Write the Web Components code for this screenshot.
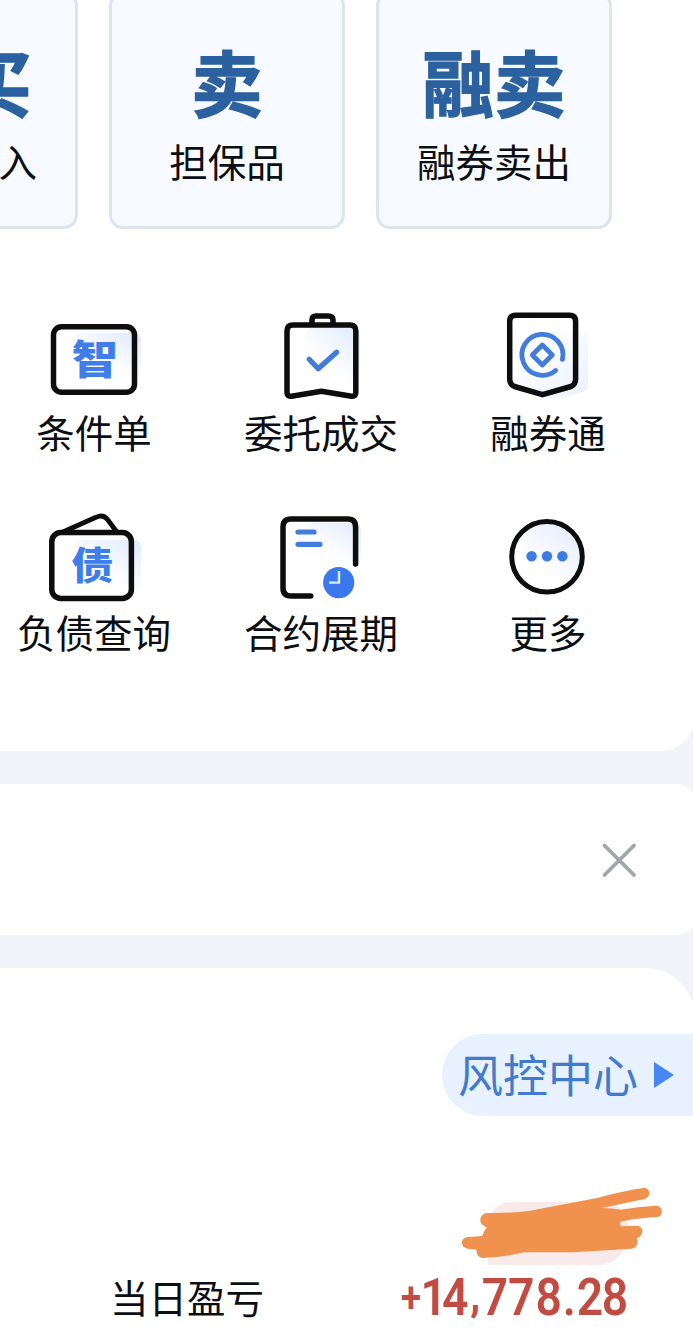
<!DOCTYPE html>
<html lang="zh-CN">
<head>
<meta charset="utf-8">
<meta name="viewport" content="width=device-width, initial-scale=1">
<title>信用交易</title>
<style>
  html, body {
    margin: 0;
    height: 100%;
    overflow: hidden;
    background: #f2f3f8;
    color: #0b0e13;
    font-family: "Noto Sans CJK SC", sans-serif;
  }
</style>
</head>
<body>
<margin-page></margin-page>

<script>
const define = (name, html, init) => {
  const template = document.createElement('template');
  template.innerHTML = html;
  customElements.define(name, class extends HTMLElement {
    constructor() {
      super();
      this.attachShadow({mode: 'open'});
      this.shadowRoot.appendChild(template.content.cloneNode(true));
    }

    connectedCallback() {
      if (init) init(this, this.shadowRoot);
    }
  });
};

const GLOW = `
  <defs>
    <linearGradient id="glow" x1="1" y1="0" x2="0.45" y2="0.7">
      <stop offset="0" stop-color="#dfe9ff"/>
      <stop offset="1" stop-color="#ffffff"/>
    </linearGradient>
  </defs>
`;

// each icon is drawn on a 100x100 box
const ICONS = {
  condition: `
    <rect x="30" y="25" width="67" height="44" rx="6" fill="url(#glow)"/>
    <rect x="9.5" y="18.8" width="81" height="65.4" rx="8" class="line"/>
    <text transform="translate(51 66) scale(1.03 0.88)" class="char">智</text>
  `,
  order: `
    <rect x="35" y="19" width="54" height="60" rx="8" fill="url(#glow)"/>
    <path d="M41 16V12Q41 8 45 8H57Q62 8 62 12V16" class="line"/>
    <path d="M22 17H79Q84.8 17 84.8 23V84Q84.8 89.5 79 88L50.5 83.2L22 88Q16 89.5 16 84V23Q16 17 22 17Z" class="line"/>
    <path d="M38.2 51.2L47.2 60.8L65.6 44.2" class="blue"/>
  `,
  security: `
    <path d="M26 25H83Q90 25 90 32V76Q90 82 85 84L62 90H48L21 79Z" fill="url(#soft)"/>
    <path d="M18 7.3H71.5Q77.6 7.3 77.6 13.5V71Q77.6 76.5 73 78.5L44.5 86.7L16.5 78.5Q11.7 76.5 11.7 71V13.5Q11.7 7.3 18 7.3Z" class="line"/>
    <path d="M64.4 51.4A20.5 20.5 0 1 0 57.6 62.5" class="blue thin"/>
    <path d="M44.3 37L54.3 47L44.3 57L34.3 47Z" class="blue thin"/>
    <linearGradient id="soft" x1="0" y1="0" x2="1" y2="1">
      <stop offset="0.2" stop-color="#ffffff"/>
      <stop offset="1" stop-color="#e9f0ff"/>
    </linearGradient>
  `,
  debt: `
    <rect x="32" y="32" width="65" height="50" rx="7" fill="url(#glow)"/>
    <path d="M20 23.5L52 9.3Q59 6 63.5 11.5L72.5 23.5" class="line" style="stroke-width:4.8"/>
    <rect x="7.8" y="24.6" width="79.6" height="65.8" rx="9" class="line"/>
    <text transform="translate(48.5 70.5) scale(1 0.9)" class="char debt">债</text>
  `,
  extend: `
    <rect x="35" y="15" width="55" height="44" rx="8" fill="url(#glow)"/>
    <path d="M84.6 56V19Q84.6 11 76.6 11H20Q12 11 12 19V80Q12 88 20 88H39.8" class="line"/>
    <path d="M27 24H43M27 36.3H49" class="blue"/>
    <circle cx="67.7" cy="74.6" r="15.6" fill="#3b78ee"/>
    <path d="M68 63V74.6H58" fill="none" stroke="#dcecff" stroke-width="2.4"/>
  `,
  more: `
    <circle cx="49" cy="48.7" r="35.3" fill="url(#glow)" stroke="#0d0d0d" stroke-width="5"/>
    <circle cx="33.6" cy="48.2" r="5.2" fill="#3f7be4"/>
    <circle cx="49" cy="48.2" r="5.2" fill="#3f7be4"/>
    <circle cx="64.4" cy="48.2" r="5.2" fill="#3f7be4"/>
  `,
};

define('trade-tile', `
  <style>
    :host {
      display: flex;
      flex-direction: column;
      align-items: center;
      flex: none;
      box-sizing: border-box;
      width: 236px;
      height: 237px;
      padding-top: 45px;
      border: 3px solid #dbe5f0;
      border-radius: 14px;
      background: #f7fbff;
      white-space: nowrap;
    }
    .title {
      font-size: 71.5px;
      line-height: 80px;
      font-weight: 700;
      color: #2c61a0;
      -webkit-text-stroke: 1.4px #2c61a0;
    }
    .note {
      margin-top: 18px;
      font-size: 38.5px;
      line-height: 44px;
      font-weight: 400;
    }
  </style>
  <div class="title"><slot name="title"></slot></div>
  <div class="note"><slot></slot></div>
`);

define('menu-item', `
  <style>
    :host {
      display: flex;
      flex-direction: column;
      align-items: center;
      gap: 1px;
    }
    svg {
      display: block;
      width: 100px;
      height: 100px;
      overflow: visible;
    }
    .line {
      fill: none;
      stroke: #0d0d0d;
      stroke-width: 5.5;
      stroke-linecap: round;
      stroke-linejoin: round;
    }
    .blue {
      fill: none;
      stroke: #427cdd;
      stroke-width: 5.2;
      stroke-linecap: round;
      stroke-linejoin: round;
    }
    .thin { stroke-width: 4.8; }
    .char {
      font-size: 45px;
      font-weight: 900;
      text-anchor: middle;
      fill: #3f7eea;
    }
    .debt { font-size: 42px; }
    .label {
      font-size: 38.5px;
      line-height: 44px;
      font-weight: 400;
      white-space: nowrap;
    }
  </style>
  <svg viewBox="0 0 100 100"></svg>
  <div class="label"><slot></slot></div>
`, (el, root) => {
  root.querySelector('svg').innerHTML = GLOW + ICONS[el.getAttribute('icon')];
});

define('page-card', `
  <style>
    :host {
      display: block;
      flex: none;
      box-sizing: border-box;
      width: 695px;
      background: #fff;
    }
  </style>
  <slot></slot>
`);

define('close-button', `
  <style>
    :host { display: block; }
    svg { display: block; width: 36px; height: 36px; }
  </style>
  <svg viewBox="0 0 36 36">
    <path d="M3.5 3.5L33 33M33 3.5L3.5 33" fill="none" stroke="#9fa6ac" stroke-width="3.8" stroke-linecap="round"/>
  </svg>
`);

define('risk-link', `
  <style>
    :host {
      display: flex;
      align-items: center;
      box-sizing: border-box;
      width: 253px;
      height: 82px;
      padding-left: 16px;
      border-radius: 41px 0 0 41px;
      background: #e8f1fe;
      color: #427bce;
      font-size: 45px;
      line-height: 60px;
      font-weight: 400;
      white-space: nowrap;
    }
    .text { margin-top: -3px; }
    svg { width: 20px; height: 26px; margin-left: 16px; }
  </style>
  <div class="text"><slot></slot></div>
  <svg viewBox="0 0 20 26"><path d="M0 0L20 13L0 26Z" fill="#4886f5"/></svg>
`);

define('masked-tag', `
  <style>
    :host {
      display: block;
      position: relative;
      width: 140px;
      height: 63px;
      border-radius: 24px 24px 30px 0;
      background: #f8eae8;
    }
    svg {
      position: absolute;
      left: -48px;
      top: -32px;
      width: 253px;
      height: 110px;
    }
  </style>
  <svg viewBox="0 0 759 330">
    <path fill="#f0914e" d="M142 129C120 130 115 157 128 164Q133 170 141 172Q131 182 127 198L84 201C60 203 60 233 83 236L110 239C108 252 115 263 128 264Q190 262 252 247H400L575 236C590 234 597 220 591 205C614 195 611 167 590 167L542 169L541 155Q590 144 651 141C671 139 670 107 649 107Q590 110 543 119Q515 115 485 114Q555 99 614 87C634 82 632 51 610 54Q545 64 475 83L270 122Q210 130 142 129Z"/>
  </svg>
`);

define('profit-row', `
  <style>
    :host {
      display: flex;
      justify-content: space-between;
      align-items: center;
      height: 60px;
    }
    .label {
      margin-top: -6px;
      font-size: 38.5px;
      line-height: 60px;
      font-weight: 400;
    }
    svg { display: block; width: 240px; height: 60px; overflow: visible; }
    text {
      font-family: Roboto, "Liberation Sans", sans-serif;
      font-size: 52.5px;
      font-weight: 600;
      fill: #c24c42;
    }
  </style>
  <div class="label"><slot></slot></div>
  <svg viewBox="0 0 240 60"><g transform="scale(0.88 1)"><text></text></g></svg>
`, (el, root) => {
  // tight pitch, one x for each glyph; small sign, raised comma
  const xs = [2, 24.5, 49, 81, 94, 124, 155, 186, 202, 230.5];
  const marks = {'+': [43, 42, 600], ',': [41, 44, 800]};
  root.querySelector('text').innerHTML = [...el.getAttribute('value')].map((c, i) => {
    const [y, size, weight] = marks[c] || [46, 52.5, 600];
    return `<tspan x="${xs[i]}" y="${y}" style="font-size:${size}px;font-weight:${weight}">${c}</tspan>`;
  }).join('');
});

define('margin-page', `
  <style>
    :host {
      display: flex;
      flex-direction: column;
      gap: 33px;
      height: 1334px;
      overflow: hidden;
    }
    .trade {
      height: 751px;
      border-radius: 0 0 34px 0;
    }
    .tiles {
      display: flex;
      gap: 31px;
      margin: -8px 0 0 -158px;
    }
    .menu {
      display: grid;
      grid-template-columns: repeat(3, 226px);
      column-gap: 1px;
      row-gap: 55px;
      margin: 79px 0 0 -19px;
    }
    .notice {
      display: flex;
      align-items: center;
      justify-content: flex-end;
      height: 151px;
      padding-right: 58.5px;
      border-radius: 0 18px 18px 0;
    }
    .assets {
      display: flex;
      flex-direction: column;
      align-items: flex-end;
      height: 400px;
      padding-top: 66px;
      border-radius: 0 50px 0 0;
    }
    masked-tag { margin: 86px 67px 0 0; }
    profit-row { width: 529px; margin: 4px 56px 0 0; }
  </style>
  <page-card class="trade">
    <div class="tiles">
      <trade-tile><span slot="title">融买</span>融资买入</trade-tile>
      <trade-tile><span slot="title">卖</span>担保品</trade-tile>
      <trade-tile><span slot="title">融卖</span>融券卖出</trade-tile>
    </div>
    <div class="menu">
      <menu-item icon="condition">条件单</menu-item>
      <menu-item icon="order">委托成交</menu-item>
      <menu-item icon="security">融券通</menu-item>
      <menu-item icon="debt">负债查询</menu-item>
      <menu-item icon="extend">合约展期</menu-item>
      <menu-item icon="more">更多</menu-item>
    </div>
  </page-card>
  <page-card class="notice"><close-button></close-button></page-card>
  <page-card class="assets">
    <risk-link>风控中心</risk-link>
    <masked-tag></masked-tag>
    <profit-row value="+14,778.28">当日盈亏</profit-row>
  </page-card>
`);
</script>
</body>
</html>
